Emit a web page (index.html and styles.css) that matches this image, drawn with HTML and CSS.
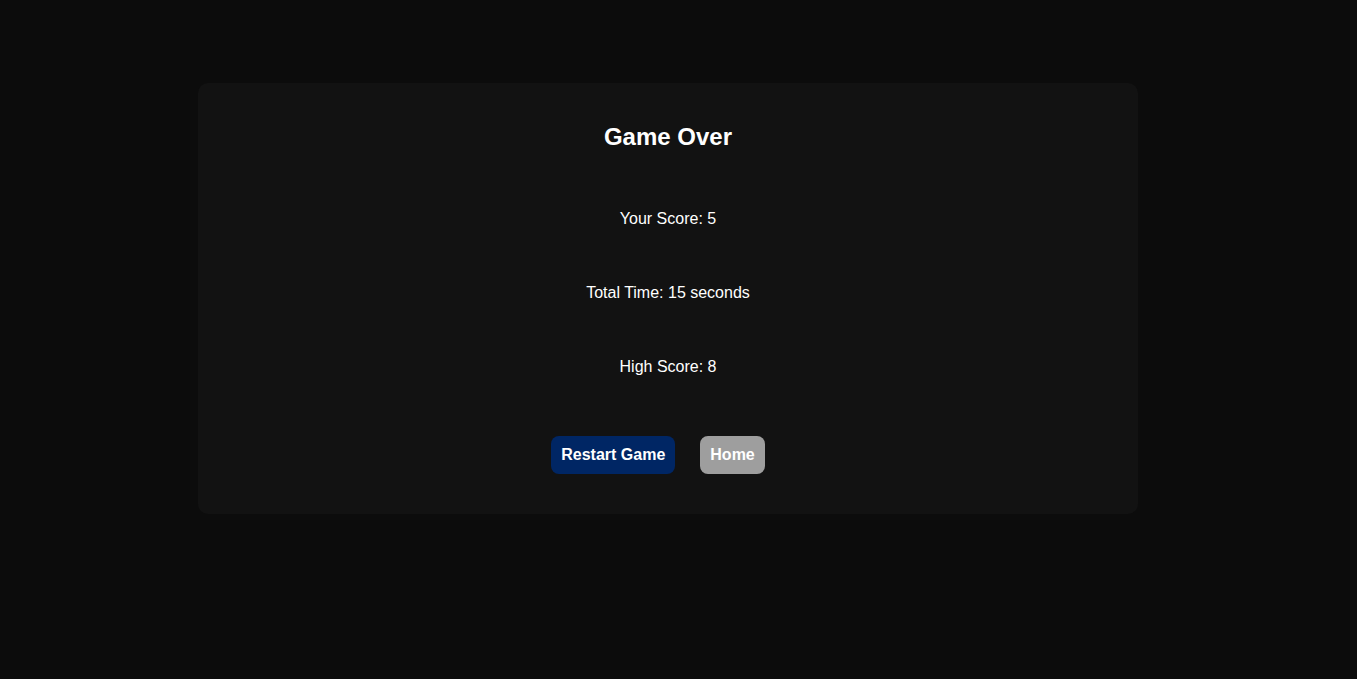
FILE: index.html
```html
<!DOCTYPE html>
<html lang="en">
<head>
<meta charset="utf-8">
<title>Game Over</title>
<link rel="stylesheet" href="styles.css">
</head>
<body>
<main class="page">
  <section class="card">
    <h2 class="title">Game Over</h2>
    <div class="stats">
      <p class="stat">Your Score: 5</p>
      <p class="stat">Total Time: 15 seconds</p>
      <p class="stat">High Score: 8</p>
    </div>
    <div class="actions">
      <button class="btn btn-restart">Restart Game</button>
      <button class="btn btn-home">Home</button>
    </div>
  </section>
</main>
</body>
</html>
```
FILE: styles.css
```css
html {
  color-scheme: dark;
  background: #0c0c0c;
  overflow-y: scroll;
}
::-webkit-scrollbar {
  width: 15px;
  background: #2b2b2b;
}
::-webkit-scrollbar-track {
  background: #2b2b2b;
}
::-webkit-scrollbar-thumb {
  background: #9f9f9f;
  border: 3px solid #2b2b2b;
  border-radius: 8px;
}
::-webkit-scrollbar-button:single-button {
  height: 14px;
  background: #2b2b2b;
}
body {
  margin: 0;
  background: #0c0c0c;
  color: #ffffff;
  font-family: "Liberation Sans", Arial, sans-serif;
}
.page {
  padding: 83px 21px 260px 0;
}
.card {
  width: 900px;
  margin: 0 auto;
  padding: 20px;
  background: #121212;
  border-radius: 10px;
  text-align: center;
}
.title {
  margin: 20px 0 0;
  font-size: 24px;
  line-height: 27.6px;
  font-weight: bold;
}
.stats {
  margin-top: 59px;
  display: flex;
  flex-direction: column;
  gap: 55.6px;
}
.stat {
  margin: 0;
  font-size: 16px;
  line-height: 18.4px;
}
.actions {
  margin: 60px 0 20px;
  display: flex;
  justify-content: center;
  gap: 25px;
  padding-right: 20px;
}
.btn {
  font-family: "Liberation Sans", Arial, sans-serif;
  font-size: 16px;
  font-weight: bold;
  line-height: 18px;
  color: #ffffff;
  border: none;
  border-radius: 8px;
  padding: 10px;
  cursor: pointer;
}
.btn-restart {
  background: #002664;
}
.btn-home {
  background: #9e9e9e;
}
```
